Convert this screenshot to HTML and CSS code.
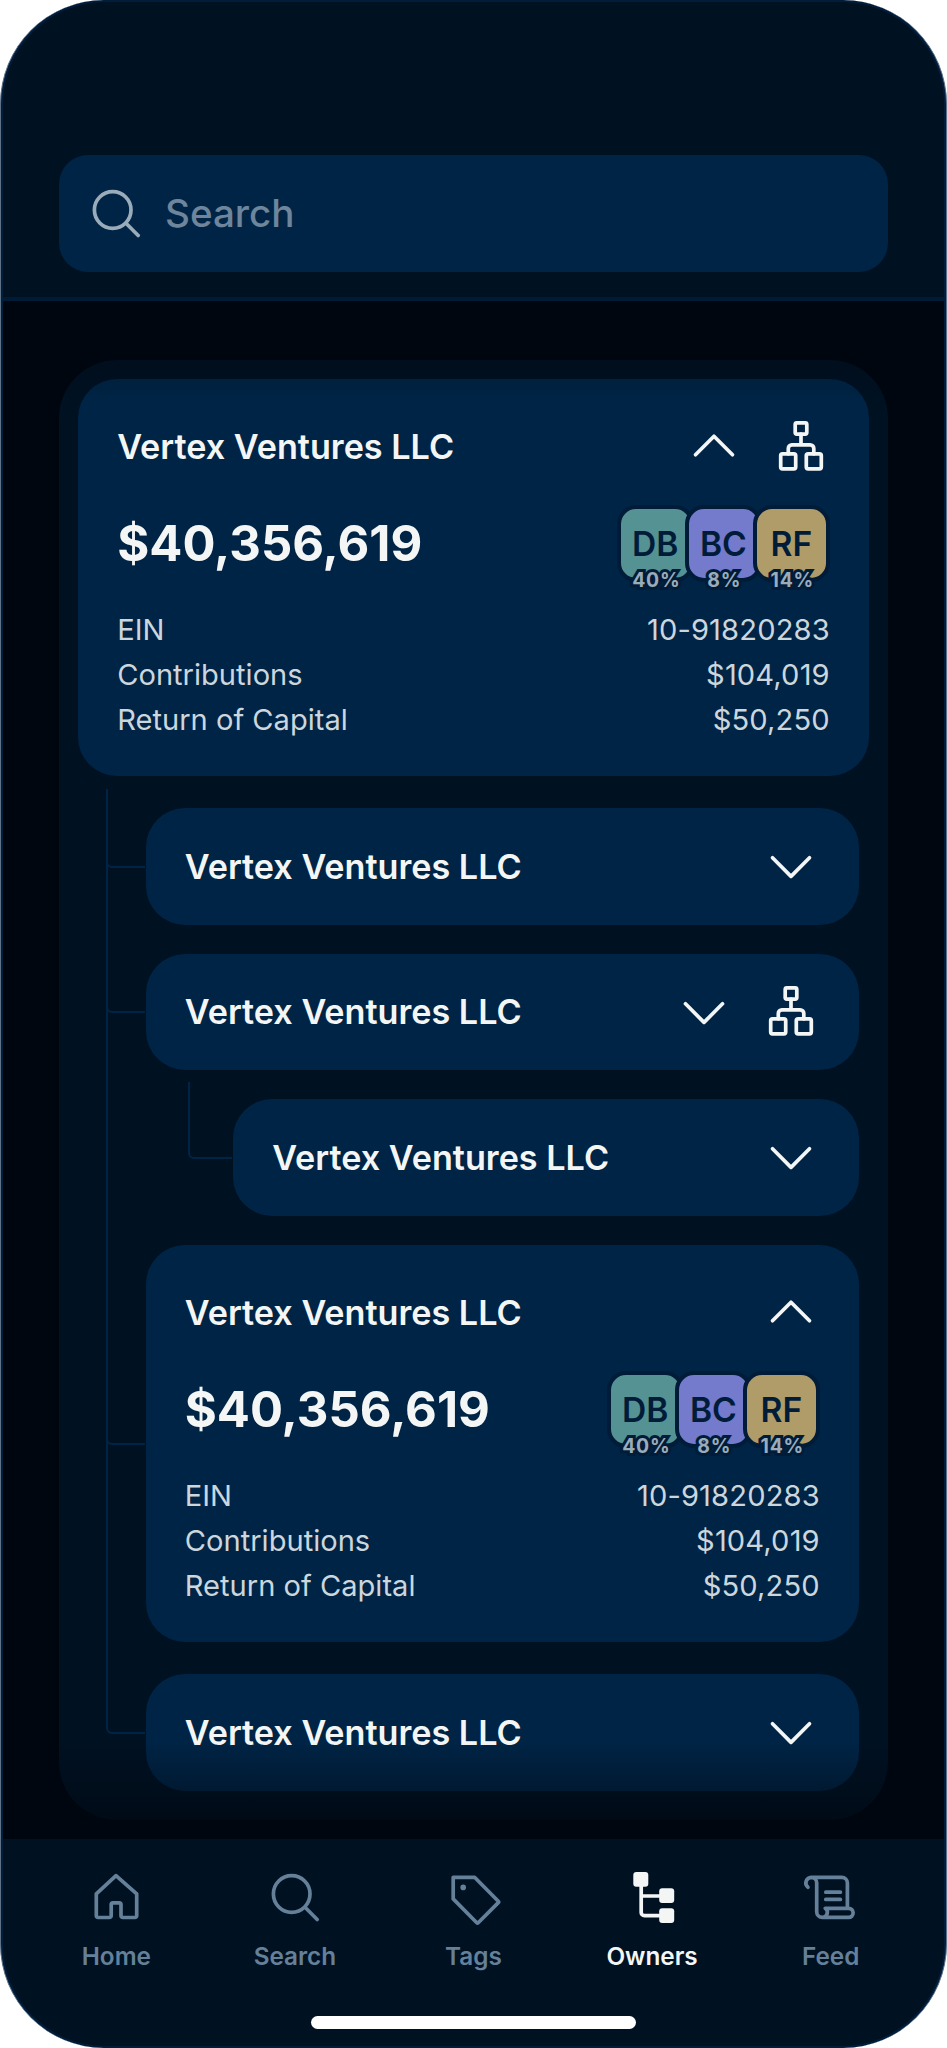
FILE: index.html
```html
<!DOCTYPE html>
<html lang="en">
<head>
    <meta charset="UTF-8">
    <meta name="viewport" content="width=device-width, initial-scale=1.0">
    <title>Owners</title>
    <link rel="stylesheet" href="styles.css">
</head>
<body>
    <!-- Shared icons -->
    <svg class="sprite" width="0" height="0">
        <symbol id="icon-search" viewBox="0 0 58 58">
            <circle cx="25.7" cy="26" r="18.3"/>
            <path d="M39 39.3 51.2 51.5"/>
        </symbol>
        <symbol id="icon-down" viewBox="0 0 58 58">
            <path d="M10.5 20.8 29 39.4 47.5 20.8"/>
        </symbol>
        <symbol id="icon-up" viewBox="0 0 58 58">
            <path d="M10.5 36.8 29 18.2 47.5 36.8"/>
        </symbol>
        <symbol id="icon-org" viewBox="0 0 58 58">
            <rect x="23.2" y="4.8" width="11.6" height="11.4" rx="1.6"/>
            <rect x="8.7" y="35.8" width="15" height="15" rx="1.8"/>
            <rect x="34.3" y="35.8" width="15" height="15" rx="1.8"/>
            <path d="M29 16.2V26.8M16.3 35.8V30.4a3.6 3.6 0 0 1 3.6-3.6H38.2a3.6 3.6 0 0 1 3.6 3.6V35.8"/>
        </symbol>
    </svg>

    <div class="phone">
        <div class="screen">
            <header class="header">
                <div class="search-box">
                    <svg class="icon"><use href="#icon-search"/></svg>
                    <span>Search</span>
                </div>
            </header>

            <main class="content">
                <div class="panel">
                    <div class="card">
                        <div class="card-top">
                            <h2>Vertex Ventures LLC</h2>
                            <svg class="icon"><use href="#icon-up"/></svg>
                            <svg class="icon"><use href="#icon-org"/></svg>
                        </div>
                        <div class="summary">
                            <strong class="amount">$40,356,619</strong>
                            <div class="avatars">
                                <div class="avatar teal">DB<span class="share">40%</span></div>
                                <div class="avatar purple">BC<span class="share">8%</span></div>
                                <div class="avatar gold">RF<span class="share">14%</span></div>
                            </div>
                        </div>
                        <dl class="details">
                            <div><dt>EIN</dt><dd>10-91820283</dd></div>
                            <div><dt>Contributions</dt><dd>$104,019</dd></div>
                            <div><dt>Return of Capital</dt><dd>$50,250</dd></div>
                        </dl>
                    </div>

                    <ul class="tree">
                        <li class="node">
                            <div class="rail"></div>
                            <div class="card collapsed">
                                <div class="card-top">
                                    <h2>Vertex Ventures LLC</h2>
                                    <svg class="icon"><use href="#icon-down"/></svg>
                                </div>
                            </div>
                        </li>
                        <li class="node">
                            <div class="rail"></div>
                            <div class="branch">
                                <div class="card collapsed">
                                    <div class="card-top">
                                        <h2>Vertex Ventures LLC</h2>
                                        <svg class="icon"><use href="#icon-down"/></svg>
                                        <svg class="icon"><use href="#icon-org"/></svg>
                                    </div>
                                </div>
                                <ul class="tree nested">
                                    <li class="node">
                                        <div class="rail"></div>
                                        <div class="card collapsed">
                                            <div class="card-top">
                                                <h2>Vertex Ventures LLC</h2>
                                                <svg class="icon"><use href="#icon-down"/></svg>
                                            </div>
                                        </div>
                                    </li>
                                </ul>
                            </div>
                        </li>
                        <li class="node open">
                            <div class="rail"></div>
                            <div class="card">
                                <div class="card-top">
                                    <h2>Vertex Ventures LLC</h2>
                                    <svg class="icon"><use href="#icon-up"/></svg>
                                </div>
                                <div class="summary">
                                    <strong class="amount">$40,356,619</strong>
                                    <div class="avatars">
                                        <div class="avatar teal">DB<span class="share">40%</span></div>
                                        <div class="avatar purple">BC<span class="share">8%</span></div>
                                        <div class="avatar gold">RF<span class="share">14%</span></div>
                                    </div>
                                </div>
                                <dl class="details">
                                    <div><dt>EIN</dt><dd>10-91820283</dd></div>
                                    <div><dt>Contributions</dt><dd>$104,019</dd></div>
                                    <div><dt>Return of Capital</dt><dd>$50,250</dd></div>
                                </dl>
                            </div>
                        </li>
                        <li class="node">
                            <div class="rail"></div>
                            <div class="card collapsed">
                                <div class="card-top">
                                    <h2>Vertex Ventures LLC</h2>
                                    <svg class="icon"><use href="#icon-down"/></svg>
                                </div>
                            </div>
                        </li>
                    </ul>
                </div>
            </main>

            <nav class="tabs">
                <a class="tab">
                    <svg class="icon" viewBox="0 0 58 58"><path d="M29 7.6 9.3 25.8V47.7a1.8 1.8 0 0 0 1.8 1.8H22.4a1.8 1.8 0 0 0 1.8-1.8V36.6a1.8 1.8 0 0 1 1.8-1.8h6.2a1.8 1.8 0 0 1 1.8 1.8V47.7a1.8 1.8 0 0 0 1.8 1.8H47.9a1.8 1.8 0 0 0 1.8-1.8V25.8Z"/></svg>
                    <span>Home</span>
                </a>
                <a class="tab">
                    <svg class="icon"><use href="#icon-search"/></svg>
                    <span>Search</span>
                </a>
                <a class="tab">
                    <svg class="icon" viewBox="0 0 58 58"><path d="M9.2 9.3H30.6L54.3 33.2a1 1 0 0 1 0 1.4L34.2 54.7a1 1 0 0 1-1.4 0L9.2 30.9Z"/><circle class="fill" cx="19.2" cy="19.4" r="2.8"/></svg>
                    <span>Tags</span>
                </a>
                <a class="tab active">
                    <svg class="icon" viewBox="0 0 58 58"><path d="M18.2 16V44.5a3.2 3.2 0 0 0 3.2 3.2H38M18.2 28H38"/><g class="fill"><rect x="10.3" y="4" width="15" height="14.8" rx="3"/><rect x="36.2" y="20.3" width="15" height="14.8" rx="3"/><rect x="36.2" y="40.3" width="15" height="14.8" rx="3"/></g></svg>
                    <span>Owners</span>
                </a>
                <a class="tab">
                    <svg class="icon" viewBox="0 0 58 58"><path d="M5.9 19.2A5.6 5.6 0 0 1 9.2 9.3a5.6 5.6 0 0 1 5.5 5.5V43.8a5.6 5.6 0 0 0 5.6 5.6H46.6a4.5 4.5 0 0 0 0-9.1H23.2a5 5 0 0 1-2.9 9.1M9.2 9.3H39.8a5.6 5.6 0 0 1 5.6 5.6V40.3M23.8 24.2H38.4M23.8 31.4H38.4"/></svg>
                    <span>Feed</span>
                </a>
            </nav>
            <div class="home-indicator"></div>
        </div>
    </div>
</body>
</html>
```

FILE: styles.css
```css
* {
    margin: 0;
    padding: 0;
    box-sizing: border-box;
}

body {
    font-family: Inter, "Liberation Sans", sans-serif;
    background: white;
    color: #f4f6f6;
}

.sprite {
    display: block;
}

.phone {
    width: 947px;
    height: 2048px;
    padding: 2px;
    background: #001e3c;
    border: solid #5f7184;
    border-width: 0 1px;
    border-radius: 104px;
}

.screen {
    height: 100%;
    display: flex;
    flex-direction: column;
    background: #001122;
    border-radius: 102px;
    overflow: hidden;
}

.icon {
    width: 58px;
    height: 58px;
    flex: none;
    fill: none;
    stroke: currentColor;
    stroke-width: 3.7;
    stroke-linecap: round;
    stroke-linejoin: round;
}

.icon .fill {
    fill: currentColor;
    stroke: none;
}

/* Header */

.header {
    height: 299px;
    padding: 153px 56px 0;
    border-bottom: 4px solid #001b36;
}

.search-box {
    height: 117px;
    display: flex;
    align-items: center;
    gap: 20px;
    padding: 0 28px 1px;
    background: #002445;
    border-radius: 29px;
    color: #9aabba;
    font-size: 38.6px;
    font-weight: 500;
}

.search-box span {
    color: #6e859c;
}

/* Owner tree */

.content {
    position: relative;
    height: 1538px;
    padding: 59px 56px 0;
    background: #00060f;
}

.content::before,
.content::after {
    content: "";
    position: absolute;
    left: 0;
    right: 0;
    height: 97px;
}

.content::before {
    top: 0;
    background: linear-gradient(rgba(0, 6, 15, 0.7), rgba(0, 6, 15, 0));
}

.content::after {
    bottom: 0;
    background: linear-gradient(rgba(0, 6, 15, 0), rgba(0, 6, 15, 0.7));
}

.panel {
    height: 1460px;
    padding: 18.5px 19.2px 0;
    background: #001122;
    border-radius: 58px;
}

.card {
    height: 397.5px;
    padding: 39px 39px 0;
    background: #002445;
    border-radius: 39px;
}

.card.collapsed {
    height: 116.5px;
    padding-top: 29px;
}

.card-top {
    display: flex;
    align-items: center;
    gap: 29px;
}

.card-top h2 {
    flex: 1;
    font-size: 34.2px;
    font-weight: 600;
    white-space: nowrap;
}

.summary {
    display: flex;
    align-items: center;
    justify-content: space-between;
    margin-top: 29.5px;
}

.amount {
    font-size: 49px;
    font-weight: 700;
}

.avatars {
    display: flex;
}

.avatar {
    position: relative;
    width: 77px;
    height: 77px;
    display: flex;
    align-items: center;
    justify-content: center;
    border: 4px solid #001c38;
    border-radius: 19px;
    color: #001c38;
    font-size: 33.6px;
    font-weight: 600;
}

.avatar + .avatar {
    margin-left: -9px;
}

.teal {
    background: #559294;
}

.purple {
    background: #747acc;
}

.gold {
    background: #b09c68;
}

.share {
    position: absolute;
    left: 1px;
    right: -1px;
    bottom: -14px;
    text-align: center;
    color: #9aabba;
    font-size: 19.4px;
    font-weight: 700;
    line-height: 24px;
    letter-spacing: 0.8px;
    -webkit-text-stroke: 6px #001c38;
    paint-order: stroke fill;
}

.details {
    margin-top: 25px;
    color: #ccd6dd;
    font-size: 29.1px;
    font-weight: 400;
    line-height: 45.1px;
}

.details div {
    display: flex;
    justify-content: space-between;
}

.details dd {
    letter-spacing: 0.15px;
}

/* Connectors */

.tree {
    list-style: none;
    margin: 13px 10px 0 28px;
}

.node {
    display: grid;
    grid-template-columns: 39.6px 1fr;
}

.node > .card,
.node > .branch {
    margin-top: 29.1px;
}

.node:first-child > .card {
    margin-top: 19px;
}

.node.open + .node > .card {
    margin-top: 32px;
}

.rail {
    border-left: 2px solid #002445;
}

.rail::before {
    content: "";
    display: block;
    width: 37px;
    height: 86px;
    margin-left: -2px;
    border: solid #002445;
    border-width: 0 0 2px 2px;
    border-bottom-left-radius: 6px;
}

.node:first-child > .rail::before {
    height: 77px;
}

.node.open > .rail::before {
    height: 227px;
}

.node.open + .node > .rail::before {
    height: 90px;
}

.node:last-child > .rail {
    border-left-color: transparent;
}

.tree.nested {
    margin: 12px 0 0 42px;
}

.nested .node {
    grid-template-columns: 45.4px 1fr;
}

.nested .node:first-child > .card {
    margin-top: 17px;
}

.nested .node:first-child > .rail::before {
    width: 42px;
    height: 75px;
}

/* Bottom tabs */

.tabs {
    display: flex;
    padding: 29px 24px 0;
}

.tab {
    flex: 1;
    display: flex;
    flex-direction: column;
    align-items: center;
    gap: 15px;
    color: #658099;
    font-size: 24.3px;
    font-weight: 600;
    line-height: 30px;
}

.tab.active {
    color: #f4f6f6;
}

.home-indicator {
    width: 325px;
    height: 13px;
    margin: 45px auto 0;
    background: white;
    border-radius: 7px;
}
```
